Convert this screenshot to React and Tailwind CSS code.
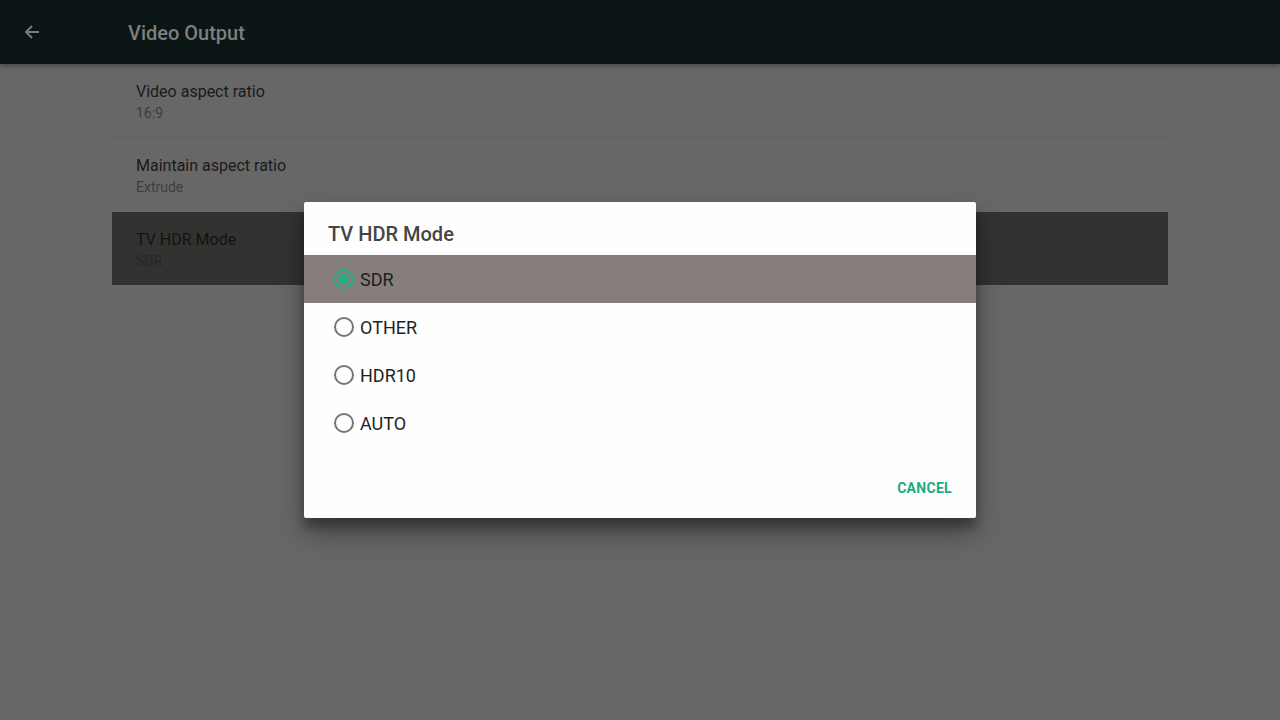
export default function App() {
  const font = { fontFamily: 'Roboto, "Noto Sans", sans-serif' };
  const options = ["SDR", "OTHER", "HDR10", "AUTO"];
  return (
    <div className="relative w-[1280px] h-[720px] overflow-hidden bg-[#676767]" style={font}>
      <div className="h-[64px] bg-[#0c1515] flex items-center shadow-[0_2px_4px_rgba(0,0,0,0.3)] relative z-10">
        <div className="w-[128px] pl-[24px] flex items-center">
          <svg width="16" height="16" viewBox="0 0 16 16" fill="none">
            <path d="M15 8H2M8 2L2 8l6 6" stroke="#787b7b" strokeWidth="2" />
          </svg>
        </div>
        <div className="text-[20px] font-medium text-[#7c7f7f] pt-[2px]">Video Output</div>
      </div>
      <div className="mx-[112px]">
        <div className="h-[74px] pl-[24px] pt-[18px] flex flex-col border-b border-[#5f5f5f]">
          <div className="text-[16px] text-[#1a1a1a] leading-[20px]">Video aspect ratio</div>
          <div className="text-[14px] text-[#3d3d3d] leading-[20px] mt-[1px]">16:9</div>
        </div>
        <div className="h-[74px] pl-[24px] pt-[18px] flex flex-col">
          <div className="text-[16px] text-[#1a1a1a] leading-[20px]">Maintain aspect ratio</div>
          <div className="text-[14px] text-[#3d3d3d] leading-[20px] mt-[1px]">Extrude</div>
        </div>
        <div className="h-[73px] pl-[24px] pt-[18px] flex flex-col bg-[#343230]">
          <div className="text-[16px] text-[#121212] leading-[20px]">TV HDR Mode</div>
          <div className="text-[14px] text-[#262626] leading-[20px] mt-[1px]">SDR</div>
        </div>
      </div>
      <div className="absolute left-[304px] top-[202px] w-[672px] h-[316px] bg-[#fefefe] rounded-[2px] shadow-[0_14px_28px_rgba(0,0,0,0.35),0_10px_10px_rgba(0,0,0,0.25)] flex flex-col">
        <div className="h-[53px] pl-[24px] flex items-end pb-[6px] text-[20px] font-medium text-[#454545]">TV HDR Mode</div>
        {options.map((o, i) => (
          <div key={o} className={`h-[48px] pl-[28px] flex items-center ${i === 0 ? "bg-[#857e7c]" : ""}`}>
            <svg width="24" height="24" viewBox="0 0 24 24" className="mr-[4px]">
              {i === 0 ? (
                <>
                  <circle cx="12" cy="12" r="9" fill="none" stroke="#1db086" strokeWidth="2" />
                  <circle cx="12" cy="12" r="5" fill="#1db086" />
                </>
              ) : (
                <circle cx="12" cy="12" r="9" fill="none" stroke="#767676" strokeWidth="2" />
              )}
            </svg>
            <span className="text-[18px] text-[#1f1f1f] pt-[1px]">{o}</span>
          </div>
        ))}
        <div className="flex-1 flex items-end justify-end pr-[24px] pb-[19px]">
          <span className="text-[14px] font-bold text-[#1fa882] tracking-[0.3px]">CANCEL</span>
        </div>
      </div>
    </div>
  );
}
